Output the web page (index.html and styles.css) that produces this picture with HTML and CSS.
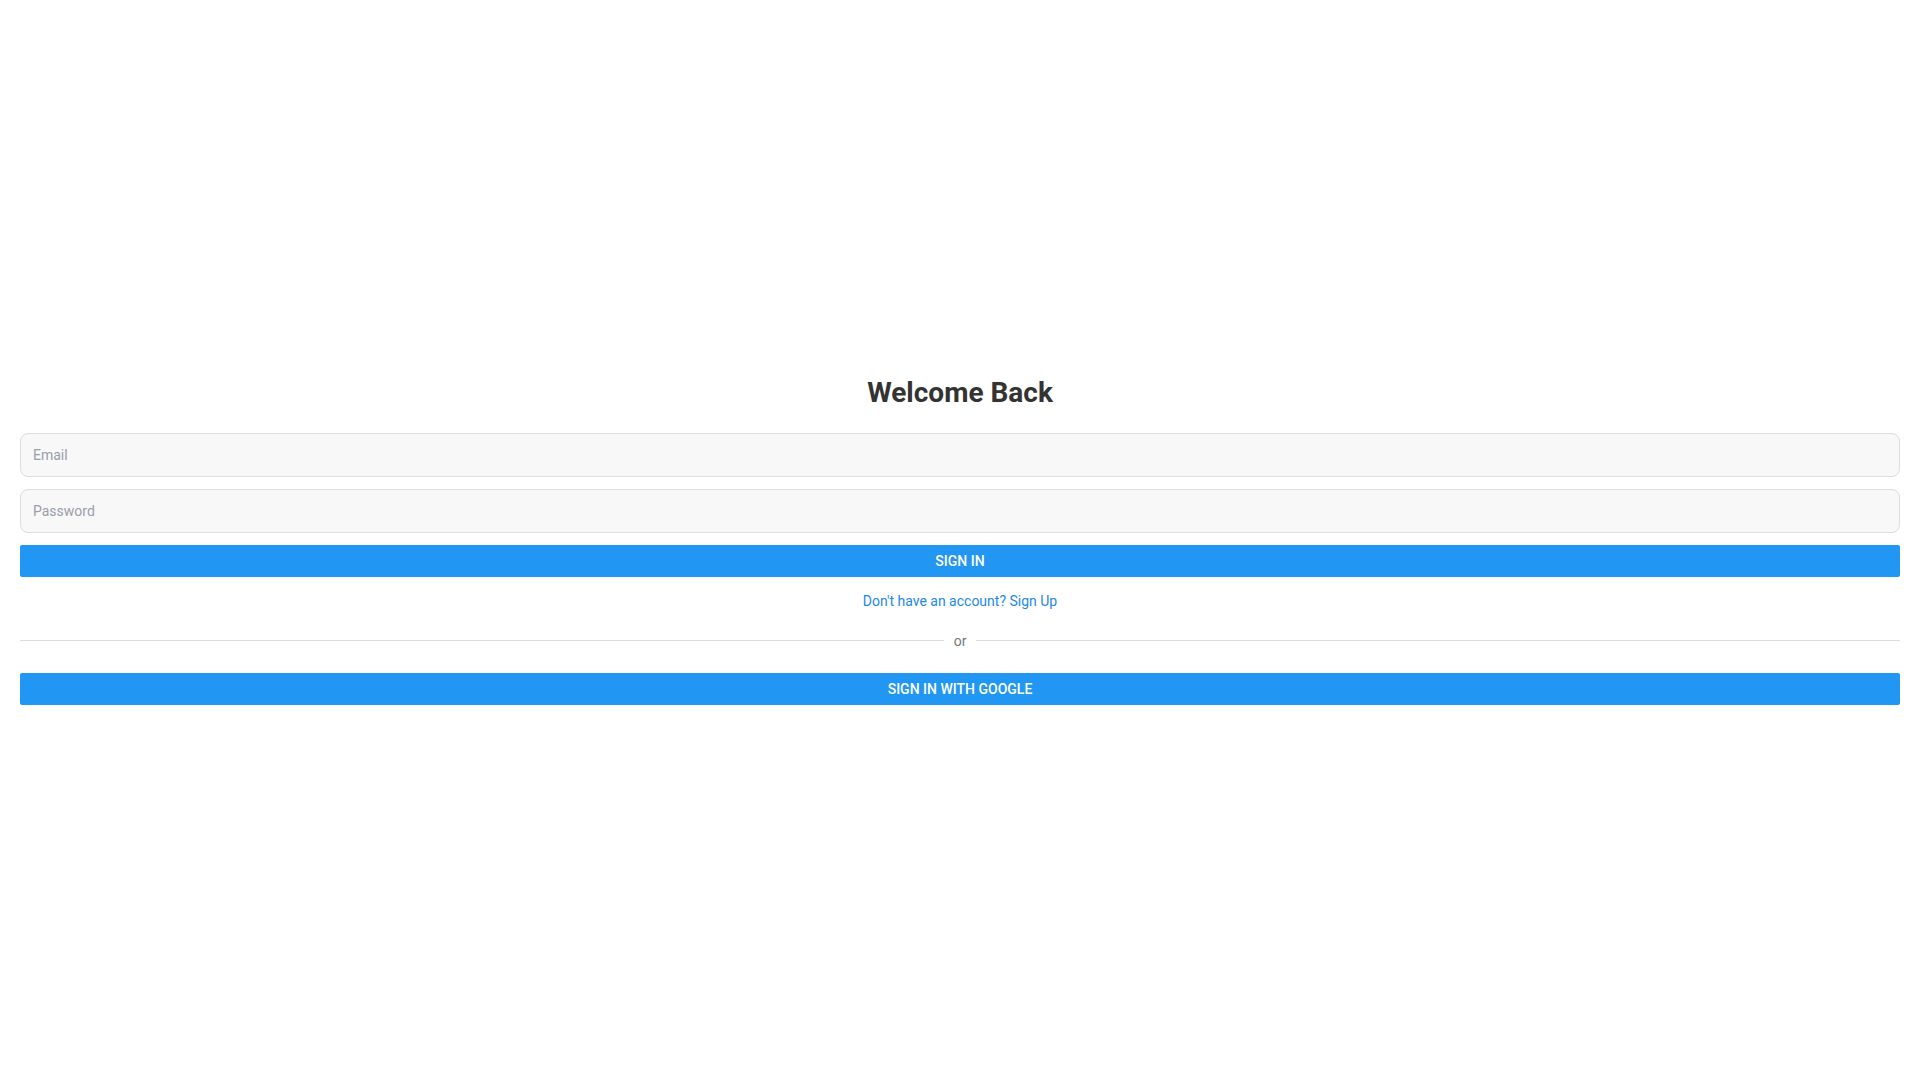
FILE: index.html
```html
<!DOCTYPE html>
<html lang="en">
<head>
<meta charset="utf-8">
<title>Sign In</title>
<link rel="stylesheet" href="styles.css">
</head>
<body>
<main class="page">
  <form class="auth">
    <h1 class="auth-title">Welcome Back</h1>
    <input class="field" type="email" placeholder="Email">
    <input class="field" type="password" placeholder="Password">
    <button class="btn" type="button">Sign In</button>
    <a class="switch-link" href="#">Don't have an account? Sign Up</a>
    <div class="divider"><span class="divider-line"></span><span class="divider-text">or</span><span class="divider-line"></span></div>
    <button class="btn" type="button">Sign In with Google</button>
  </form>
</main>
</body>
</html>
```
FILE: styles.css
```css
* { box-sizing: border-box; }
html, body { margin: 0; padding: 0; background: #fff; }
body { font-family: Roboto, "Noto Sans", Arial, sans-serif; color: #333; }
.page {
  min-height: 100vh;
  display: flex;
  flex-direction: column;
  justify-content: center;
  padding: 0 20px;
}
.auth { display: flex; flex-direction: column; }
.auth-title {
  margin: 0 0 23px;
  font-size: 28px;
  line-height: 34px;
  font-weight: 700;
  text-align: center;
  color: #333;
}
.field {
  height: 44px;
  margin: 0 0 12px;
  padding: 0 12px;
  border: 1px solid #ddd;
  border-radius: 8px;
  background: #f8f8f8;
  font-family: inherit;
  font-size: 14px;
  color: #333;
  outline: none;
}
.field::placeholder { color: #9a9ea8; }
.btn {
  height: 32px;
  border: 0;
  border-radius: 2px;
  background: #2196f3;
  color: #fff;
  font-family: inherit;
  font-size: 14px;
  font-weight: 500;
  text-transform: uppercase;
  cursor: pointer;
}
.switch-link {
  margin: 15px 0 0;
  align-self: center;
  font-size: 14px;
  line-height: 18px;
  color: #1e88e5;
  text-decoration: none;
}
.divider {
  display: flex;
  align-items: center;
  margin: 21px 0 22px;
  height: 20px;
}
.divider-line { flex: 1; height: 1px; background: #dcdcdc; }
.divider-text { padding: 0 10px; font-size: 14px; color: #777; }
```
